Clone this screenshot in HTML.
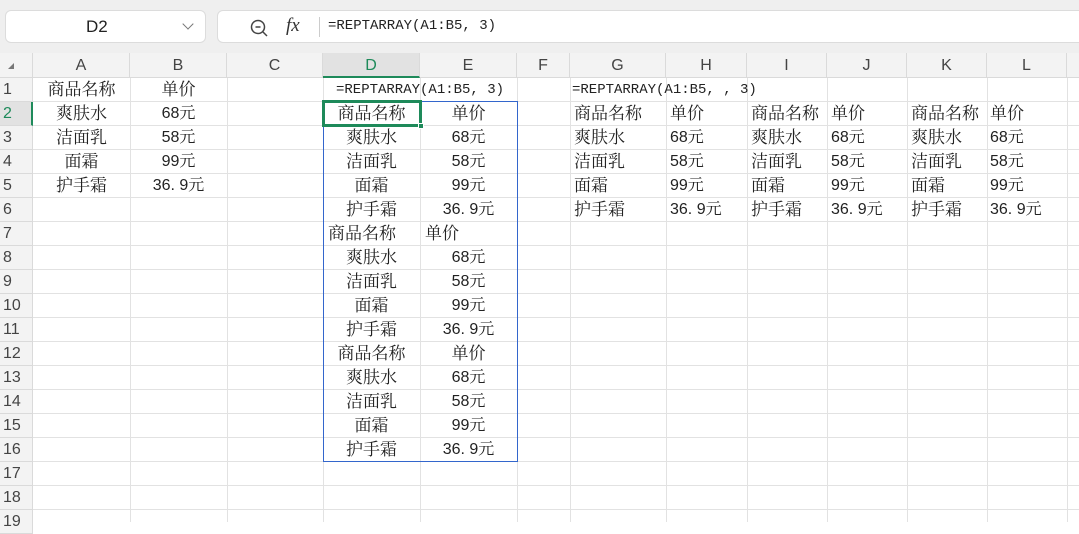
<!DOCTYPE html><html><head><meta charset="utf-8"><style>
*{margin:0;padding:0;box-sizing:border-box}
body{width:1079px;height:521px;overflow:hidden;background:#fff;position:relative;font-family:"Liberation Serif","Noto Serif CJK SC",serif;font-size:17px;color:#222}
.top{position:absolute;left:0;top:0;width:1079px;height:53px;background:#efefef}
.box{position:absolute;background:#fff;border:1px solid #dcdcdc;border-radius:6px}
.hdr{position:absolute;top:53px;height:25px;background:#f3f3f3;border-right:1px solid #dadada;border-bottom:1px solid #dadada;font-family:"Liberation Sans",sans-serif;font-size:16px;color:#444;text-align:center;line-height:25px}
.rh{position:absolute;left:0;width:33px;height:24px;background:#f3f3f3;border-bottom:1px solid #dadada;border-right:1px solid #dadada;font-family:"Liberation Sans",sans-serif;font-size:16px;color:#444;line-height:24px;padding-left:3px}
.vl{position:absolute;top:78px;width:1px;height:444px;background:#e2e2e2}
.hl{position:absolute;left:33px;height:1px;width:1047px;background:#e2e2e2}
.c{position:absolute;height:24px;line-height:24px;white-space:nowrap;text-align:center}
.l{position:absolute;height:24px;line-height:24px;white-space:nowrap}
.n{font-family:"Liberation Sans","Noto Serif CJK SC",sans-serif;font-size:16px}
.m{font-family:"Liberation Mono",monospace;font-size:14px}
</style></head><body>
<div class="top"></div>
<div class="box" style="left:5px;top:10px;width:201px;height:33px"><div style="position:absolute;left:80px;top:6px;font-family:'Liberation Sans',sans-serif;font-size:17px;color:#222">D2</div><div style="position:absolute;left:178px;top:9px;width:8px;height:8px;border-right:1.5px solid #777;border-bottom:1.5px solid #777;transform:rotate(45deg)"></div></div>
<div class="box" style="left:217px;top:10px;width:870px;height:33px">
<svg style="position:absolute;left:30px;top:6px" width="22" height="22" viewBox="0 0 22 22"><circle cx="10" cy="10" r="6.5" fill="none" stroke="#444" stroke-width="1.5"/><path d="M7.5 10h5M15 15l4 4" stroke="#444" stroke-width="1.5"/></svg>
<div style="position:absolute;left:68px;top:4px;font-family:'Liberation Serif',serif;font-style:italic;font-size:19px;color:#333">fx</div>
<div style="position:absolute;left:101px;top:6px;width:1px;height:20px;background:#ccc"></div>
<div class="m" style="position:absolute;left:110px;top:7px;color:#222">=REPTARRAY(A1:B5, 3)</div></div>
<div class="hdr" style="left:0;width:33px"><span style="position:absolute;left:8px;top:10px;width:0;height:0;border-left:6px solid transparent;border-bottom:6px solid #777"></span></div>
<div class="hdr" style="left:33px;width:97px">A</div>
<div class="hdr" style="left:130px;width:97px">B</div>
<div class="hdr" style="left:227px;width:96px">C</div>
<div class="hdr" style="left:323px;width:97px;background:#e2e2e2;border-bottom:2px solid #1e8a5a;color:#1e8a5a">D</div>
<div class="hdr" style="left:420px;width:97px">E</div>
<div class="hdr" style="left:517px;width:53px">F</div>
<div class="hdr" style="left:570px;width:96px">G</div>
<div class="hdr" style="left:666px;width:81px">H</div>
<div class="hdr" style="left:747px;width:80px">I</div>
<div class="hdr" style="left:827px;width:80px">J</div>
<div class="hdr" style="left:907px;width:80px">K</div>
<div class="hdr" style="left:987px;width:80px">L</div>
<div class="hdr" style="left:1067px;width:40px"></div>
<div class="vl" style="left:130px"></div><div class="vl" style="left:227px"></div><div class="vl" style="left:323px"></div><div class="vl" style="left:420px"></div><div class="vl" style="left:517px"></div><div class="vl" style="left:570px"></div><div class="vl" style="left:666px"></div><div class="vl" style="left:747px"></div><div class="vl" style="left:827px"></div><div class="vl" style="left:907px"></div><div class="vl" style="left:987px"></div><div class="vl" style="left:1067px"></div>
<div class="hl" style="top:101px"></div><div class="hl" style="top:125px"></div><div class="hl" style="top:149px"></div><div class="hl" style="top:173px"></div><div class="hl" style="top:197px"></div><div class="hl" style="top:221px"></div><div class="hl" style="top:245px"></div><div class="hl" style="top:269px"></div><div class="hl" style="top:293px"></div><div class="hl" style="top:317px"></div><div class="hl" style="top:341px"></div><div class="hl" style="top:365px"></div><div class="hl" style="top:389px"></div><div class="hl" style="top:413px"></div><div class="hl" style="top:437px"></div><div class="hl" style="top:461px"></div><div class="hl" style="top:485px"></div><div class="hl" style="top:509px"></div>
<div class="rh" style="top:78px">1</div><div class="rh" style="top:102px;color:#1e8a5a;background:#e2e2e2;border-right:2px solid #1e8a5a">2</div><div class="rh" style="top:126px">3</div><div class="rh" style="top:150px">4</div><div class="rh" style="top:174px">5</div><div class="rh" style="top:198px">6</div><div class="rh" style="top:222px">7</div><div class="rh" style="top:246px">8</div><div class="rh" style="top:270px">9</div><div class="rh" style="top:294px">10</div><div class="rh" style="top:318px">11</div><div class="rh" style="top:342px">12</div><div class="rh" style="top:366px">13</div><div class="rh" style="top:390px">14</div><div class="rh" style="top:414px">15</div><div class="rh" style="top:438px">16</div><div class="rh" style="top:462px">17</div><div class="rh" style="top:486px">18</div><div class="rh" style="top:510px">19</div>
<div class="c" style="left:33px;width:97px;top:78px">商品名称</div><div class="c" style="left:130px;width:97px;top:78px">单价</div>
<div class="c" style="left:33px;width:97px;top:102px">爽肤水</div><div class="c n" style="left:130px;width:97px;top:102px">68元</div>
<div class="c" style="left:33px;width:97px;top:126px">洁面乳</div><div class="c n" style="left:130px;width:97px;top:126px">58元</div>
<div class="c" style="left:33px;width:97px;top:150px">面霜</div><div class="c n" style="left:130px;width:97px;top:150px">99元</div>
<div class="c" style="left:33px;width:97px;top:174px">护手霜</div><div class="c n" style="left:130px;width:97px;top:174px">36. 9元</div>
<div class="l m" style="left:336px;top:78px">=REPTARRAY(A1:B5, 3)</div>
<div style="position:absolute;left:323px;top:101px;width:195px;height:361px;border:1px solid #3366cc"></div>
<div class="c" style="left:323px;width:97px;top:102px">商品名称</div><div class="c" style="left:420px;width:97px;top:102px">单价</div>
<div class="c" style="left:323px;width:97px;top:126px">爽肤水</div><div class="c n" style="left:420px;width:97px;top:126px">68元</div>
<div class="c" style="left:323px;width:97px;top:150px">洁面乳</div><div class="c n" style="left:420px;width:97px;top:150px">58元</div>
<div class="c" style="left:323px;width:97px;top:174px">面霜</div><div class="c n" style="left:420px;width:97px;top:174px">99元</div>
<div class="c" style="left:323px;width:97px;top:198px">护手霜</div><div class="c n" style="left:420px;width:97px;top:198px">36. 9元</div>
<div class="l" style="left:328px;top:222px">商品名称</div><div class="l" style="left:425px;top:222px">单价</div>
<div class="c" style="left:323px;width:97px;top:246px">爽肤水</div><div class="c n" style="left:420px;width:97px;top:246px">68元</div>
<div class="c" style="left:323px;width:97px;top:270px">洁面乳</div><div class="c n" style="left:420px;width:97px;top:270px">58元</div>
<div class="c" style="left:323px;width:97px;top:294px">面霜</div><div class="c n" style="left:420px;width:97px;top:294px">99元</div>
<div class="c" style="left:323px;width:97px;top:318px">护手霜</div><div class="c n" style="left:420px;width:97px;top:318px">36. 9元</div>
<div class="c" style="left:323px;width:97px;top:342px">商品名称</div><div class="c" style="left:420px;width:97px;top:342px">单价</div>
<div class="c" style="left:323px;width:97px;top:366px">爽肤水</div><div class="c n" style="left:420px;width:97px;top:366px">68元</div>
<div class="c" style="left:323px;width:97px;top:390px">洁面乳</div><div class="c n" style="left:420px;width:97px;top:390px">58元</div>
<div class="c" style="left:323px;width:97px;top:414px">面霜</div><div class="c n" style="left:420px;width:97px;top:414px">99元</div>
<div class="c" style="left:323px;width:97px;top:438px">护手霜</div><div class="c n" style="left:420px;width:97px;top:438px">36. 9元</div>
<div style="position:absolute;left:322px;top:100px;width:100px;height:27px;border:3px solid #1e8a5a"></div>
<div style="position:absolute;left:418px;top:123px;width:6px;height:6px;background:#1e8a5a;border:1px solid #fff"></div>
<div class="l m" style="left:572px;top:78px">=REPTARRAY(A1:B5, , 3)</div>
<div class="l" style="left:574px;top:102px">商品名称</div><div class="l" style="left:670px;top:102px">单价</div><div class="l" style="left:751px;top:102px">商品名称</div><div class="l" style="left:831px;top:102px">单价</div><div class="l" style="left:911px;top:102px">商品名称</div><div class="l" style="left:990px;top:102px">单价</div>
<div class="l" style="left:574px;top:126px">爽肤水</div><div class="l n" style="left:670px;top:126px">68元</div><div class="l" style="left:751px;top:126px">爽肤水</div><div class="l n" style="left:831px;top:126px">68元</div><div class="l" style="left:911px;top:126px">爽肤水</div><div class="l n" style="left:990px;top:126px">68元</div>
<div class="l" style="left:574px;top:150px">洁面乳</div><div class="l n" style="left:670px;top:150px">58元</div><div class="l" style="left:751px;top:150px">洁面乳</div><div class="l n" style="left:831px;top:150px">58元</div><div class="l" style="left:911px;top:150px">洁面乳</div><div class="l n" style="left:990px;top:150px">58元</div>
<div class="l" style="left:574px;top:174px">面霜</div><div class="l n" style="left:670px;top:174px">99元</div><div class="l" style="left:751px;top:174px">面霜</div><div class="l n" style="left:831px;top:174px">99元</div><div class="l" style="left:911px;top:174px">面霜</div><div class="l n" style="left:990px;top:174px">99元</div>
<div class="l" style="left:574px;top:198px">护手霜</div><div class="l n" style="left:670px;top:198px">36. 9元</div><div class="l" style="left:751px;top:198px">护手霜</div><div class="l n" style="left:831px;top:198px">36. 9元</div><div class="l" style="left:911px;top:198px">护手霜</div><div class="l n" style="left:990px;top:198px">36. 9元</div>
</body></html>
